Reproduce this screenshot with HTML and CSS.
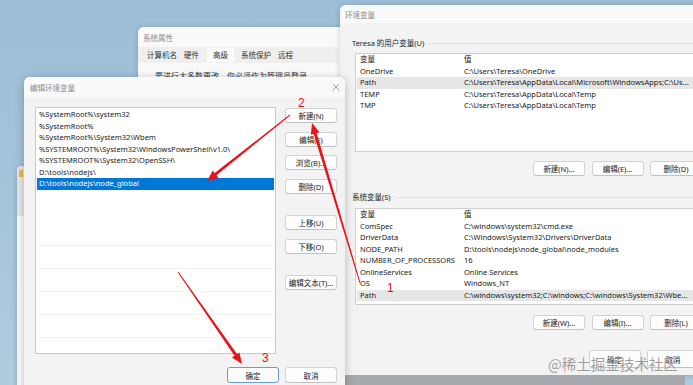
FILE: index.html
```html
<!DOCTYPE html>
<html lang="zh-CN">
<head>
    <meta charset="UTF-8">
    <meta name="viewport" content="width=device-width, initial-scale=1.0">
    <title>编辑环境变量</title>
    <link rel="stylesheet" href="styles.css">
</head>
<body>
    <div class="desk">
        <div class="win win-back"><span class="back-icon"></span></div>

        <div class="win win-sys">
            <div class="titlebar">系统属性</div>
            <div class="tabs">
                <span class="tab">计算机名</span>
                <span class="tab">硬件</span>
                <span class="tab active">高级</span>
                <span class="tab">系统保护</span>
                <span class="tab">远程</span>
            </div>
            <div class="sys-text">要进行大多数更改，你必须作为管理员登录。</div>
        </div>

        <div class="win win-env">
            <div class="titlebar">环境变量</div>
            <div class="env-body">
                <div class="group-label">Teresa 的用户变量(U)</div>
                <div class="varlist user-list">
                    <div class="row"><span class="name">变量</span><span class="val">值</span></div>
                    <div class="row"><span class="name">OneDrive</span><span class="val">C:\Users\Teresa\OneDrive</span></div>
                    <div class="row hl"><span class="name">Path</span><span class="val">C:\Users\Teresa\AppData\Local\Microsoft\WindowsApps;C:\Us...</span></div>
                    <div class="row"><span class="name">TEMP</span><span class="val">C:\Users\Teresa\AppData\Local\Temp</span></div>
                    <div class="row"><span class="name">TMP</span><span class="val">C:\Users\Teresa\AppData\Local\Temp</span></div>
                </div>
                <div class="btn-row">
                    <button class="btn">新建(N)...</button>
                    <button class="btn">编辑(E)...</button>
                    <button class="btn">删除(D)</button>
                </div>

                <div class="group-label sys-label">系统变量(S)</div>
                <div class="varlist sys-list">
                    <div class="row"><span class="name">变量</span><span class="val">值</span></div>
                    <div class="row"><span class="name">ComSpec</span><span class="val">C:\windows\system32\cmd.exe</span></div>
                    <div class="row"><span class="name">DriverData</span><span class="val">C:\Windows\System32\Drivers\DriverData</span></div>
                    <div class="row"><span class="name">NODE_PATH</span><span class="val">D:\tools\nodejs\node_global\node_modules</span></div>
                    <div class="row"><span class="name">NUMBER_OF_PROCESSORS</span><span class="val">16</span></div>
                    <div class="row"><span class="name">OnlineServices</span><span class="val">Online Services</span></div>
                    <div class="row"><span class="name">OS</span><span class="val">Windows_NT</span></div>
                    <div class="row hl"><span class="name">Path</span><span class="val">C:\windows\system32;C:\windows;C:\windows\System32\Wbe...</span></div>
                    <div class="row"><span class="name">PATHEXT</span><span class="val">.COM;.EXE;.BAT;.CMD;.VBS;.VBE;.JS;.JSE;.WSF;.WSH;.MSC</span></div>
                </div>
                <div class="btn-row">
                    <button class="btn">新建(W)...</button>
                    <button class="btn">编辑(I)...</button>
                    <button class="btn">删除(L)</button>
                </div>

                <div class="btn-row foot">
                    <button class="btn tall">确定</button>
                    <button class="btn tall">取消</button>
                </div>
            </div>
        </div>
        <div class="env-shadow"></div>

        <div class="win win-edit">
            <div class="titlebar edit-title">
                <span>编辑环境变量</span>
                <svg class="close" width="8" height="8" viewBox="0 0 8 8">
                    <path d="M1 1 L7 7 M7 1 L1 7" stroke="#8c8c8c" stroke-width="0.8" fill="none"/>
                </svg>
            </div>
            <div class="edit-body">
                <div class="edit-main">
                    <div class="pathlist">
                        <div class="prow">%SystemRoot%\system32</div>
                        <div class="prow">%SystemRoot%</div>
                        <div class="prow">%SystemRoot%\System32\Wbem</div>
                        <div class="prow">%SYSTEMROOT%\System32\WindowsPowerShell\v1.0\</div>
                        <div class="prow">%SYSTEMROOT%\System32\OpenSSH\</div>
                        <div class="prow">D:\tools\nodejs\</div>
                        <div class="prow sel">D:\tools\nodejs\node_global</div>
                    </div>
                    <div class="side">
                        <button class="btn">新建(N)</button>
                        <button class="btn">编辑(E)</button>
                        <button class="btn">浏览(B)...</button>
                        <button class="btn">删除(D)</button>
                        <button class="btn spaced">上移(U)</button>
                        <button class="btn">下移(O)</button>
                        <button class="btn spaced">编辑文本(T)...</button>
                    </div>
                </div>
                <div class="btn-row edit-foot">
                    <button class="btn primary">确定</button>
                    <button class="btn">取消</button>
                </div>
            </div>
        </div>

        <!-- red annotations drawn over the screenshot -->
        <svg class="marks" width="693" height="385" viewBox="0 0 693 385">
            <g fill="#e8141c">
                <polygon points="360.5,282.9 316.6,133.1 319.5,132.3 312,123 310.9,134.8 313.7,134.0 359.5,283.1"/>
                <polygon points="289.7,114.6 214.7,173.0 212.8,170.6 207,181 218.4,177.7 216.5,175.3 290.3,115.4"/>
                <polygon points="177.6,272.3 234.5,355.8 232.0,357.5 242,364 239.4,352.4 237.0,354.1 178.4,271.7"/>
            </g>
            <g class="num" fill="#e8141c">
                <text x="298" y="107">2</text>
                <text x="387" y="292">1</text>
                <text x="262" y="362">3</text>
            </g>
        </svg>

        <div class="watermark">@稀土掘金技术社区</div>
    </div>
</body>
</html>
```

FILE: styles.css
```css
body {
    margin: 0;
    font-family: "Noto Sans", "Noto Sans CJK SC", sans-serif;
    font-size: 7.5px;
    color: #1a1a1a;
}
.desk {
    position: relative;
    width: 693px;
    height: 385px;
    overflow: hidden;
    background: linear-gradient(180deg, #9dbed7 0%, #a6c4da 55%, #b1cbde 100%);
}
.win {
    position: absolute;
    background: #f3f3f3;
    border-radius: 6px 6px 0 0;
    box-shadow: 0 1px 6px rgba(0, 0, 0, 0.18);
    overflow: hidden;
}
.titlebar {
    background: #fafafa;
    color: #8a8a8a;
    display: flex;
    align-items: center;
    padding-left: 5px;
}

/* window far left, mostly hidden */
.win-back {
    left: 17px;
    top: 166px;
    width: 40px;
    height: 230px;
    background: linear-gradient(180deg, #e8e8e8 0, #e8e8e8 50px, #fbfbfb 50px);
    border-radius: 4px 0 0 0;
}
.back-icon {
    position: absolute;
    left: 2px;
    top: 4px;
    width: 4px;
    height: 7px;
    background: #f0b44c;
}

/* 系统属性 */
.win-sys {
    left: 138px;
    top: 27px;
    width: 240px;
    height: 110px;
    background: #f9f9f9;
}
.win-sys .titlebar {
    height: 20px;
    font-size: 7.5px;
}
.tabs {
    display: flex;
    align-items: center;
    height: 16px;
    padding-left: 6px;
    margin-right: 40px;
    background: #efefef;
    font-size: 7.5px;
    color: #333;
}
.tab {
    padding: 0 3px;
    line-height: 16px;
    margin-right: 1px;
}
.tab.active {
    background: #fbfbfb;
    padding: 0 6px;
    margin: 0 4px;
    line-height: 14px;
    align-self: flex-start;
    margin-top: 1px;
}
.sys-text {
    padding: 8px 0 0 17px;
    font-size: 8px;
    line-height: 10px;
    color: #333;
}

/* 环境变量 */
.win-env {
    left: 340px;
    top: 5px;
    width: 375px;
    height: 370px;
}
.win-env .titlebar {
    height: 18px;
    font-size: 7.5px;
}
.env-shadow {
    position: absolute;
    left: 340px;
    top: 375px;
    width: 345px;
    height: 10px;
    background: #a5a9ad;
}
.env-body {
    padding: 15px 13px 0 12px;
}
.group-label {
    display: flex;
    align-items: center;
    gap: 4px;
    height: 10px;
    line-height: 10px;
    color: #222;
}
.group-label::after {
    content: "";
    flex: 1;
    height: 1px;
    background: #e2e2e2;
}
.sys-label {
    margin-top: 16px;
}
.varlist {
    margin: 5px 0 0 3px;
    background: #fff;
    border: 1px solid #cfcfcf;
    overflow: hidden;
    box-sizing: border-box;
}
.user-list {
    height: 99px;
}
.sys-list {
    margin-top: 6px;
    height: 97px;
}
.row {
    display: flex;
    height: 11.5px;
    line-height: 11.5px;
    padding-left: 3px;
    white-space: nowrap;
    margin-left: 1px;
}
.row.hl {
    background: #e6e6e6;
}
.name {
    width: 104px;
    flex: none;
}
.val {
    flex: none;
}
.btn-row {
    display: flex;
    justify-content: flex-end;
    gap: 6.5px;
    margin-top: 9px;
}
.sys-list + .btn-row {
    margin-top: 10px;
}
.btn-row.foot {
    margin-top: 20px;
    padding-right: 3px;
}
.btn {
    width: 52px;
    height: 15px;
    padding: 0;
    font-family: inherit;
    font-size: 7.5px;
    color: #1a1a1a;
    background: #fdfdfd;
    border: 1px solid #d3d3d3;
    border-bottom-color: #c0c0c0;
    border-radius: 3px;
    white-space: nowrap;
}
.btn.tall {
    height: 18px;
}

/* 编辑环境变量 */
.win-edit {
    left: 24px;
    top: 77px;
    width: 321px;
    height: 320px;
    box-shadow: 0 2px 10px rgba(0, 0, 0, 0.25);
}
.edit-title {
    height: 20px;
    justify-content: space-between;
    padding: 0 5px 0 6px;
    font-size: 7.5px;
}
.close {
    display: block;
}
.edit-body {
    padding: 10px 8px 0 11px;
}
.edit-main {
    display: flex;
    gap: 9px;
}
.pathlist {
    width: 241px;
    height: 247px;
    box-sizing: border-box;
    padding: 1px;
    background-color: #fff;
    background-image: repeating-linear-gradient(180deg, transparent 0, transparent 11px, #f3f3f3 11px, #f3f3f3 11.5px);
    border: 1px solid #c9c9c9;
}
.prow {
    height: 11.5px;
    line-height: 11.5px;
    padding-left: 2px;
    white-space: nowrap;
    background: #fff;
}
.prow.sel {
    background: #0078d7;
    color: #fff;
}
.side {
    display: flex;
    flex-direction: column;
    gap: 8.5px;
    padding-top: 1px;
}
.side .btn.spaced {
    margin-top: 13px;
}
.edit-foot {
    margin-top: 13px;
    gap: 6px;
}
.edit-foot .btn {
    height: 16px;
}
.btn.primary {
    border: 1px solid #6b9bd6;
}

.marks {
    position: absolute;
    left: 0;
    top: 0;
    pointer-events: none;
}
.num {
    font-family: "Liberation Sans", Arial, sans-serif;
    font-size: 12px;
}
.watermark {
    position: absolute;
    left: 548px;
    top: 355px;
    font-family: "Noto Sans CJK SC", sans-serif;
    font-size: 14.5px;
    line-height: 18px;
    color: rgba(125, 125, 125, 0.75);
    text-shadow: 0 0 1px rgba(255, 255, 255, 0.8);
    white-space: nowrap;
}
```
